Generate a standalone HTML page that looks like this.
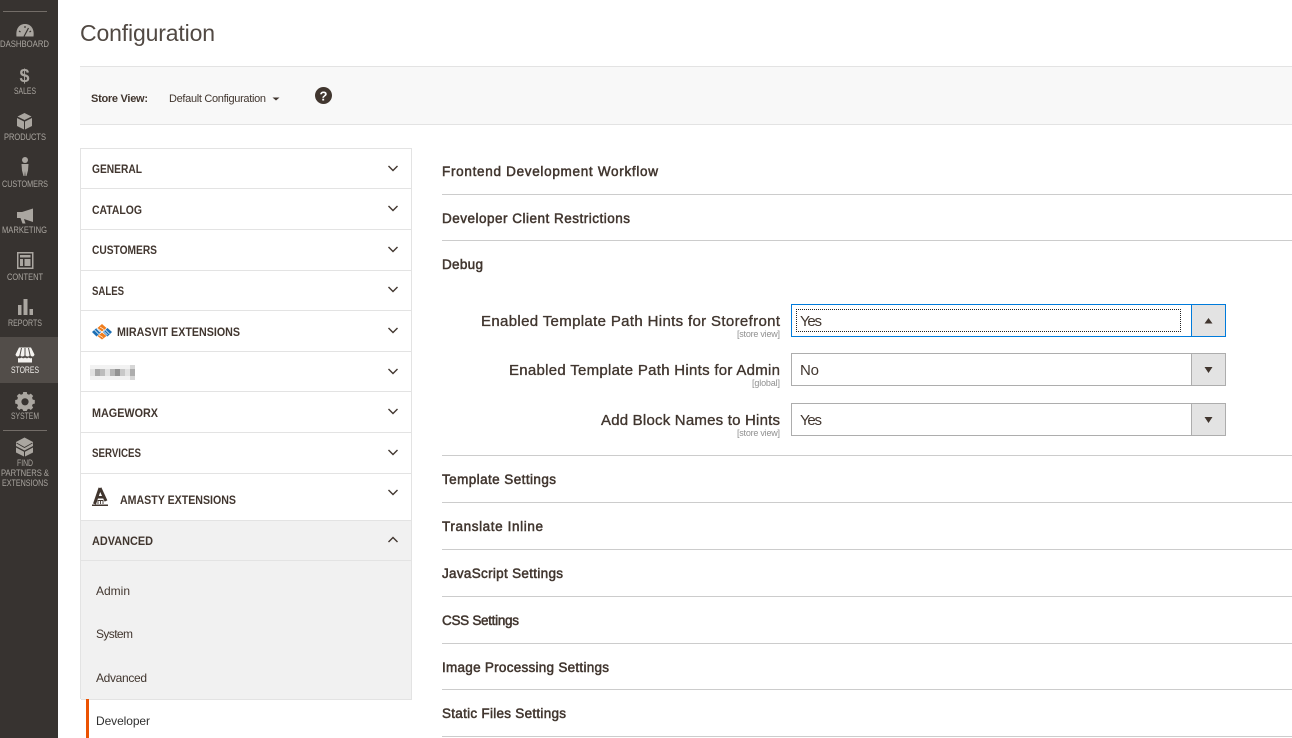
<!DOCTYPE html>
<html lang="en"><head><meta charset="utf-8"><title>Configuration</title>
<style>
html,body{margin:0;padding:0;background:#fff;width:1292px;height:738px;overflow:hidden}
body{position:relative}
svg{display:block;font-family:"Liberation Sans",Arial,sans-serif}
.nav{font-size:9.5px;fill:#aaa6a0}
.ic{fill:#aaa6a0}
.grp{font-size:11.5px;font-weight:bold;fill:#41362f}
.sec{font-size:13.5px;fill:#41362f;stroke:#41362f;stroke-width:.5}
.lbl{font-size:15px;fill:#41362f;stroke:#41362f;stroke-width:.35}
.sc{font-size:9px;fill:#909090}
.sub{font-size:12px;fill:#41362f}
.val{font-size:15px;fill:#41362f}
.chev{fill:none;stroke:#41362f;stroke-width:1.4}
.ln{stroke:#cccccc;stroke-width:1;shape-rendering:crispEdges}
.pl{stroke:#e3e3e3;stroke-width:1;shape-rendering:crispEdges}
#focus{position:absolute;left:796px;top:309px;width:383px;height:21px;border:1px dotted #222}
</style></head><body>
<svg width="1292" height="738" viewBox="0 0 1292 738" xmlns="http://www.w3.org/2000/svg">
<!-- sidebar -->
<rect width="58" height="738" fill="#373330"/>
<rect x="0" y="337" width="58" height="46" fill="#524d49"/>
<rect x="3" y="11" width="44" height="1" fill="#736d68"/>
<rect x="3" y="430" width="44" height="1" fill="#736d68"/>
<!-- dashboard -->
<path class="ic" d="M16.500 36.500C15.500 29 19 24 25 24S34.500 29 33.500 36.500Z"/>
<path stroke="#373330" stroke-width="1.200" fill="none" d="M24 36.500L28.500 28M19 31L20.500 32M25 26V28M31 31L29.500 32"/>
<text class="nav" x="0" y="47" textLength="49" lengthAdjust="spacingAndGlyphs">DASHBOARD</text>
<!-- sales -->
<text x="24.500" y="82" text-anchor="middle" font-size="18" font-weight="bold" fill="#aaa6a0">$</text>
<text class="nav" x="14" y="94" textLength="22" lengthAdjust="spacingAndGlyphs">SALES</text>
<!-- products -->
<path class="ic" d="M24.500 113L31.500 116.500L24.500 120L17.500 116.500ZM17 118L24 121.500V129.500L17 126ZM32 118V126L25 129.500V121.500Z"/>
<text class="nav" x="4" y="140" textLength="42" lengthAdjust="spacingAndGlyphs">PRODUCTS</text>
<!-- customers -->
<circle class="ic" cx="25" cy="160" r="3"/>
<path class="ic" d="M21.500 164H28.500L28 170.500L26.500 176H25.500L25 171L24.500 176H23.500L22 170.500Z"/>
<text class="nav" x="2" y="187" textLength="46" lengthAdjust="spacingAndGlyphs">CUSTOMERS</text>
<!-- marketing -->
<path class="ic" d="M17 212H22L33 208.500V222L24 219L25.500 223.500H22.500L20.500 218H17Z"/>
<text class="nav" x="2" y="233" textLength="45" lengthAdjust="spacingAndGlyphs">MARKETING</text>
<!-- content -->
<path class="ic" fill-rule="evenodd" d="M17 252H33.500V269H17ZM18.500 253.500V267.500H32V253.500ZM20 255H30.500V257.500H20ZM20 259H23V266H20ZM24.500 259H30.500V266H24.500Z"/>
<text class="nav" x="7" y="280" textLength="36" lengthAdjust="spacingAndGlyphs">CONTENT</text>
<!-- reports -->
<path class="ic" d="M18 305H21.500V315H18ZM23.500 299H27.500V315H23.500ZM29.500 309H33V315H29.500Z"/>
<text class="nav" x="8" y="326" textLength="34" lengthAdjust="spacingAndGlyphs">REPORTS</text>
<!-- stores -->
<path fill="#f4f2ef" d="M19 347.500H31L34.500 354.500C34 357 31.500 357 30 355C29 357 26.500 357 25 355C23.500 357 21 357 20 355C18.500 357 16 357 15.500 354.500ZM18 358C19 358.500 20.500 358.500 21.500 357.500C23 358.500 24 358.500 25 357.500C26.500 358.500 27.500 358.500 28.500 357.500C30 358.500 31 358.500 32 358V362.500H18Z"/>
<path stroke="#524d49" stroke-width="1" fill="none" d="M21.500 348L19.800 356M25 348V356M28.500 348L30.200 356"/>
<text x="11" y="373" font-size="9.500" fill="#f1efec" textLength="28" lengthAdjust="spacingAndGlyphs">STORES</text>
<!-- system -->
<path class="ic" fill-rule="evenodd" d="M23.200 392H26.800L27.200 394L29 394.800L30.800 393.600L33.200 396L32 397.800L32.800 399.600L34.800 400V403.600L32.800 404L32 405.800L33.200 407.600L30.800 410L29 408.800L27.200 409.600L26.800 411H23.200L22.800 409.600L21 408.800L19.200 410L16.800 407.600L18 405.800L17.200 404L15.200 403.600V400L17.200 399.600L18 397.800L16.800 396L19.200 393.600L21 394.800L22.800 394ZM25 398.200A3.600 3.600 0 1 0 25 405.400A3.600 3.600 0 1 0 25 398.200Z"/>
<text class="nav" x="11" y="419" textLength="28" lengthAdjust="spacingAndGlyphs">SYSTEM</text>
<!-- find partners -->
<path class="ic" d="M24.500 437.500L33 442V446L24.500 450.500L16 446V442ZM16 447.500L24 451.700V456.500L16 452.500ZM33 447.500V452.500L25 456.500V451.700Z"/>
<path stroke="#373330" stroke-width=".8" fill="none" d="M16.500 443L24.500 447.500L32.500 443"/>
<text class="nav" x="17" y="466" textLength="16" lengthAdjust="spacingAndGlyphs">FIND</text>
<text class="nav" x="1" y="476" textLength="48" lengthAdjust="spacingAndGlyphs">PARTNERS &amp;</text>
<text class="nav" x="2" y="486" textLength="46" lengthAdjust="spacingAndGlyphs">EXTENSIONS</text>

<!-- title -->
<text x="80" y="41" font-size="23" fill="#514943" textLength="135">Configuration</text>

<!-- store bar -->
<rect x="80" y="66" width="1212" height="59" fill="#f8f8f8"/>
<line class="pl" x1="80" y1="66.500" x2="1292" y2="66.500"/>
<line class="pl" x1="80" y1="124.500" x2="1292" y2="124.500"/>
<text x="91" y="102" font-size="11" font-weight="bold" fill="#41362f" textLength="57">Store View:</text>
<text x="169" y="102" font-size="11" fill="#41362f" textLength="97">Default Configuration</text>
<path d="M272.500 97.500H279.500L276 100.500Z" fill="#41362f"/>
<circle cx="323.500" cy="95.500" r="8.500" fill="#41362f"/>
<text x="323.500" y="100.500" font-size="13" font-weight="bold" fill="#fff" text-anchor="middle">?</text>

<!-- left panel -->
<rect x="81" y="520" width="330" height="179" fill="#f1f1f1"/>
<path class="pl" fill="none" d="M80.500 699V148.500H411.500V699"/>
<line class="pl" x1="81" y1="188.500" x2="411" y2="188.500"/>
<line class="pl" x1="81" y1="229.500" x2="411" y2="229.500"/>
<line class="pl" x1="81" y1="270.500" x2="411" y2="270.500"/>
<line class="pl" x1="81" y1="310.500" x2="411" y2="310.500"/>
<line class="pl" x1="81" y1="351.500" x2="411" y2="351.500"/>
<line class="pl" x1="81" y1="391.500" x2="411" y2="391.500"/>
<line class="pl" x1="81" y1="432.500" x2="411" y2="432.500"/>
<line class="pl" x1="81" y1="473.500" x2="411" y2="473.500"/>
<line class="pl" x1="81" y1="520.500" x2="411" y2="520.500"/>
<line class="pl" x1="81" y1="560.500" x2="411" y2="560.500"/>
<line class="pl" x1="81" y1="699.500" x2="412" y2="699.500"/>

<text class="grp" x="92" y="173" textLength="50" lengthAdjust="spacingAndGlyphs">GENERAL</text>
<text class="grp" x="92" y="214" textLength="50" lengthAdjust="spacingAndGlyphs">CATALOG</text>
<text class="grp" x="92" y="254" textLength="65" lengthAdjust="spacingAndGlyphs">CUSTOMERS</text>
<text class="grp" x="92" y="295" textLength="32" lengthAdjust="spacingAndGlyphs">SALES</text>
<text class="grp" x="117" y="336" textLength="123" lengthAdjust="spacingAndGlyphs">MIRASVIT EXTENSIONS</text>
<text class="grp" x="92" y="417" textLength="66" lengthAdjust="spacingAndGlyphs">MAGEWORX</text>
<text class="grp" x="92" y="457" textLength="49" lengthAdjust="spacingAndGlyphs">SERVICES</text>
<text class="grp" x="120" y="504" textLength="116" lengthAdjust="spacingAndGlyphs">AMASTY EXTENSIONS</text>
<text class="grp" x="92" y="545" textLength="61" lengthAdjust="spacingAndGlyphs">ADVANCED</text>

<path class="chev" d="M388.500 166L393 170.500L397.500 166"/>
<path class="chev" d="M388.500 206L393 210.500L397.500 206"/>
<path class="chev" d="M388.500 247L393 251.500L397.500 247"/>
<path class="chev" d="M388.500 287L393 291.500L397.500 287"/>
<path class="chev" d="M388.500 328L393 332.500L397.500 328"/>
<path class="chev" d="M388.500 369L393 373.500L397.500 369"/>
<path class="chev" d="M388.500 409L393 413.500L397.500 409"/>
<path class="chev" d="M388.500 450L393 454.500L397.500 450"/>
<path class="chev" d="M388.500 490L393 494.500L397.500 490"/>
<path class="chev" d="M388.500 542L393 537.500L397.500 542"/>

<!-- mirasvit logo -->
<path fill="#f07d1c" d="M102 324L106.500 328L102 331.500L97.500 328ZM102 332.500L106.500 336L102 339.500L97.500 336Z"/>
<path fill="#1b6fb5" d="M92 332L96.500 328L101 332L96.500 336.500ZM103 332L107.500 328L112 332L107.500 336.500Z"/>
<path stroke="#fff" stroke-width=".7" fill="none" d="M94.500 330L98.500 334M96.500 328.500L100 332M105.500 330L109.500 334M104 331.500L107.500 335M100 327L104 329.500M99 335L103 337.500"/>

<!-- pixelated logo -->
<g shape-rendering="crispEdges">
<rect x="90" y="365" width="45" height="15" fill="#f2f2f2"/>
<rect x="90" y="369" width="45" height="7" fill="#e2e2e2"/>
<rect x="95" y="369" width="5" height="7" fill="#a9a9a9"/>
<rect x="100" y="369" width="5" height="7" fill="#bcbcbc"/>
<rect x="110" y="369" width="5" height="7" fill="#b4b4b4"/>
<rect x="115" y="369" width="5" height="7" fill="#929292"/>
<rect x="120" y="369" width="5" height="7" fill="#c8c8c8"/>
<rect x="130" y="369" width="5" height="7" fill="#adadad"/>
<rect x="130" y="365" width="5" height="4" fill="#d6d6d6"/>
<rect x="130" y="376" width="5" height="4" fill="#d6d6d6"/>
</g>

<!-- amasty logo -->
<path stroke="#41362f" stroke-width="3" fill="none" d="M100 488L94.500 504M100 488L106 501"/>
<path fill="#41362f" d="M96 496H104V498.500H96ZM92 504.500H108V506H92Z"/>
<path stroke="#41362f" stroke-width=".9" fill="#fff" d="M98 504V500.500H103V504"/>
<path stroke="#41362f" stroke-width=".9" fill="none" d="M100.500 500.500V504"/>

<text class="sub" x="96" y="595" textLength="34">Admin</text>
<text class="sub" x="96" y="638" textLength="37">System</text>
<text class="sub" x="96" y="682" textLength="51">Advanced</text>
<rect x="86" y="699" width="3" height="39" fill="#eb5202"/>
<text x="96" y="725" font-size="12" fill="#303030" textLength="54">Developer</text>

<!-- sections -->
<text class="sec" x="442" y="176" textLength="216">Frontend Development Workflow</text>
<line class="ln" x1="442" y1="194.500" x2="1292" y2="194.500"/>
<text class="sec" x="442" y="223" textLength="188">Developer Client Restrictions</text>
<line class="ln" x1="442" y1="240.500" x2="1292" y2="240.500"/>
<text class="sec" x="442" y="269" textLength="41">Debug</text>

<text class="lbl" x="481" y="326" textLength="299">Enabled Template Path Hints for Storefront</text>
<text class="sc" x="737" y="337" textLength="43">[store view]</text>
<text class="lbl" x="509" y="375" textLength="271">Enabled Template Path Hints for Admin</text>
<text class="sc" x="752" y="386" textLength="28">[global]</text>
<text class="lbl" x="601" y="425" textLength="179">Add Block Names to Hints</text>
<text class="sc" x="737" y="436" textLength="43">[store view]</text>

<!-- select 1 -->
<rect x="1191.500" y="304.500" width="34" height="32" fill="#e3e3e3"/>
<rect x="791.500" y="304.500" width="434" height="32" fill="none" stroke="#007bdb" shape-rendering="crispEdges"/>
<line x1="1191.500" y1="304" x2="1191.500" y2="337" stroke="#007bdb" shape-rendering="crispEdges"/>
<text class="val" x="800" y="326" textLength="22">Yes</text>
<path d="M1204.500 323.500L1208.500 318L1212.500 323.500Z" fill="#41362f"/>
<!-- select 2 -->
<rect x="1191.500" y="353.500" width="34" height="32" fill="#e3e3e3"/>
<rect x="791.500" y="353.500" width="434" height="32" fill="none" stroke="#adadad" shape-rendering="crispEdges"/>
<line x1="1191.500" y1="353" x2="1191.500" y2="386" stroke="#adadad" shape-rendering="crispEdges"/>
<text class="val" x="800" y="375" textLength="19">No</text>
<path d="M1204.500 367L1212.500 367L1208.500 373Z" fill="#41362f"/>
<!-- select 3 -->
<rect x="1191.500" y="403.500" width="34" height="32" fill="#e3e3e3"/>
<rect x="791.500" y="403.500" width="434" height="32" fill="none" stroke="#adadad" shape-rendering="crispEdges"/>
<line x1="1191.500" y1="403" x2="1191.500" y2="436" stroke="#adadad" shape-rendering="crispEdges"/>
<text class="val" x="800" y="425" textLength="22">Yes</text>
<path d="M1204.500 417L1212.500 417L1208.500 423Z" fill="#41362f"/>

<line class="ln" x1="442" y1="455.500" x2="1292" y2="455.500"/>
<text class="sec" x="442" y="484" textLength="114">Template Settings</text>
<line class="ln" x1="442" y1="502.500" x2="1292" y2="502.500"/>
<text class="sec" x="442" y="531" textLength="101">Translate Inline</text>
<line class="ln" x1="442" y1="549.500" x2="1292" y2="549.500"/>
<text class="sec" x="442" y="578" textLength="121">JavaScript Settings</text>
<line class="ln" x1="442" y1="596.500" x2="1292" y2="596.500"/>
<text class="sec" x="442" y="625" textLength="77">CSS Settings</text>
<line class="ln" x1="442" y1="643.500" x2="1292" y2="643.500"/>
<text class="sec" x="442" y="672" textLength="167">Image Processing Settings</text>
<line class="ln" x1="442" y1="689.500" x2="1292" y2="689.500"/>
<text class="sec" x="442" y="718" textLength="124">Static Files Settings</text>
<line class="ln" x1="442" y1="736.500" x2="1292" y2="736.500"/>
</svg>
<div id="focus"></div>
</body></html>
